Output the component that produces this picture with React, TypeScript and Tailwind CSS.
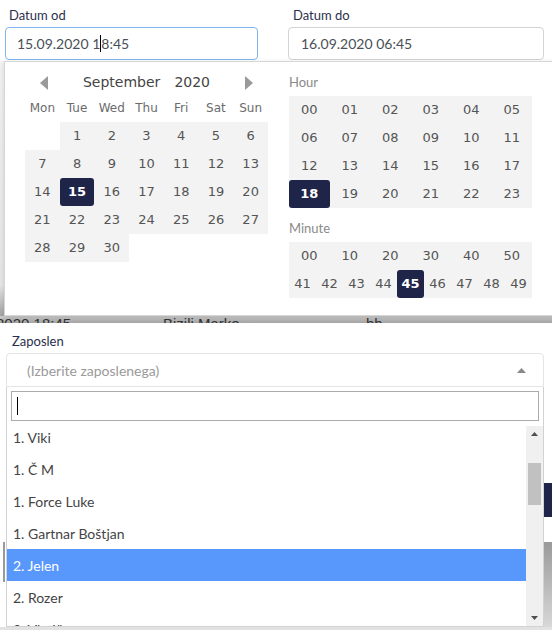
const weeks: (number | null)[][] = [
  [null, 1, 2, 3, 4, 5, 6],
  [7, 8, 9, 10, 11, 12, 13],
  [14, 15, 16, 17, 18, 19, 20],
  [21, 22, 23, 24, 25, 26, 27],
  [28, 29, 30, null, null, null, null],
];

const hours = Array.from({ length: 24 }, (_, i) => String(i).padStart(2, "0"));
const minutesTop = ["00", "10", "20", "30", "40", "50"];
const minutesFine = ["41", "42", "43", "44", "45", "46", "47", "48", "49"];

const employees = ["1. Viki", "1. Č M", "1. Force Luke", "1. Gartnar Boštjan", "2. Jelen", "2. Rozer", "3. Vlatič"];

function Arrow({ dir }: { dir: "left" | "right" }) {
  return (
    <svg width="8" height="14" viewBox="0 0 8 14">
      <polygon points={dir === "left" ? "8,0 0,7 8,14" : "0,0 8,7 0,14"} fill="#9a9a9a" />
    </svg>
  );
}

function Calendar() {
  return (
    <div className="w-[243px] shrink-0 font-['DejaVu_Sans',sans-serif]">
      <div className="h-[24px] flex items-center pt-[1px]">
        <div className="w-[38px] flex justify-center">
          <Arrow dir="left" />
        </div>
        <div className="flex-1 flex justify-center gap-[14px] text-[14px] text-[#444]">
          <span>September</span>
          <span>2020</span>
        </div>
        <div className="w-[38px] flex justify-center">
          <Arrow dir="right" />
        </div>
      </div>
      <div className="grid grid-cols-7 h-[28px] items-center text-center text-[12px] text-[#6b6b6b]">
        {["Mon", "Tue", "Wed", "Thu", "Fri", "Sat", "Sun"].map((d) => (
          <span key={d}>{d}</span>
        ))}
      </div>
      <div className="grid grid-cols-7">
        {weeks.flat().map((d, i) =>
          d === null ? (
            <div key={i} className="h-[28px]" />
          ) : d === 15 ? (
            <div key={i} className="h-[28px] flex items-center justify-center bg-[#f3f3f3]">
              <span className="w-full h-full flex items-center justify-center rounded-[3px] bg-[#1f2548] text-white font-bold text-[13px]">
                {d}
              </span>
            </div>
          ) : (
            <div key={i} className="h-[28px] flex items-center justify-center bg-[#f3f3f3] text-[13px] text-[#555]">
              {d}
            </div>
          )
        )}
      </div>
    </div>
  );
}

function TimePicker() {
  return (
    <div className="w-[243px] shrink-0">
      <div className="h-[24px] flex items-center pt-[1px] text-[13px] text-[#8a8a8a]">Hour</div>
      <div className="mt-[2px] grid grid-cols-6 bg-[#f3f3f3] font-['DejaVu_Sans',sans-serif] text-[13px] text-[#555]">
        {hours.map((h) => (
          <div
            key={h}
            className={
              h === "18"
                ? "h-[28px] flex items-center justify-center rounded-[3px] bg-[#1f2548] text-white font-bold"
                : "h-[28px] flex items-center justify-center"
            }
          >
            {h}
          </div>
        ))}
      </div>
      <div className="mt-[8px] h-[24px] flex items-center pt-[1px] text-[13px] text-[#8a8a8a]">Minute</div>
      <div className="mt-[2px] bg-[#f3f3f3] font-['DejaVu_Sans',sans-serif] text-[13px] text-[#555]">
        <div className="grid grid-cols-6">
          {minutesTop.map((m) => (
            <div key={m} className="h-[28px] flex items-center justify-center">
              {m}
            </div>
          ))}
        </div>
        <div className="grid grid-cols-9">
          {minutesFine.map((m) => (
            <div
              key={m}
              className={
                m === "45"
                  ? "h-[28px] flex items-center justify-center rounded-[3px] bg-[#1f2548] text-white font-bold"
                  : "h-[28px] flex items-center justify-center"
              }
            >
              {m}
            </div>
          ))}
        </div>
      </div>
    </div>
  );
}

export default function App() {
  return (
    <div className="w-[552px] h-[630px] overflow-hidden bg-white font-['Lato',sans-serif] text-[#495057]">
      {/* Date range */}
      <section className="relative h-[316px]">
        <div className="grid grid-cols-[253px_256px] gap-x-[30px] pl-[5px] pt-[6px]">
          <div>
            <label className="block pl-[4px] h-[21px] text-[13px] leading-[18px] text-[#2b2f4c]">Datum od</label>
            <div className="h-[33px] border border-[#7db6ee] rounded-[4px] pl-[11px] flex items-center text-[14px] text-[#495057]">
              15.09.2020 1<span className="inline-block w-px h-[17px] bg-black" />8:45
            </div>
          </div>
          <div>
            <label className="block pl-[5px] h-[21px] text-[13px] leading-[18px] text-[#2b2f4c]">Datum do</label>
            <div className="h-[33px] border border-[#d4d4d4] rounded-[4px] pl-[12px] flex items-center text-[14px] text-[#495057]">
              16.09.2020 06:45
            </div>
          </div>
        </div>

        <div className="absolute left-0 top-[61px] w-[5px] h-[255px] bg-gradient-to-b from-[#f4f4f4] via-[#e8e8e8] via-[88%] to-[#a4a4a4]" />

        {/* Date time popover */}
        <div className="absolute left-[4px] top-[61px] -right-[20px] h-[255px] bg-white border border-[#d6d6d6] shadow-[0_2px_6px_rgba(0,0,0,0.15)] flex gap-[21px] pl-[20px] pt-[8px]">
          <Calendar />
          <TimePicker />
        </div>
      </section>

      {/* Table row behind */}
      <div className="h-[7px] overflow-hidden bg-gradient-to-b from-[#d2d2d2] to-[#a6a6a6] flex text-[15px] leading-[15px] font-['Liberation_Sans',sans-serif] text-[#333]">
        <span className="-ml-[4px] w-[167px] shrink-0">2020 18:45</span>
        <span className="w-[203px] shrink-0">Bizili Marko</span>
        <span>bb</span>
      </div>

      {/* Employee select */}
      <section className="relative h-[307px]">
        <div className="absolute right-0 top-[160px] w-[8px] h-[34px] bg-[#1f2548]" />
        <div className="absolute right-0 top-[219px] w-[8px] h-[85px] bg-gradient-to-b from-[#9a9a9a] to-[#d8d8d8]" />
        <div className="absolute left-[3px] top-[219px] w-[2px] h-[40px] bg-[#9a9a9a]" />

        <label className="block pl-[12px] pt-[9px] text-[13px] leading-[18px] text-[#2b2f4c]">Zaposlen</label>
        <div className="relative ml-[6px] mt-[3px] w-[538px]">
          <div className="h-[34px] border border-[#e4e4e4] rounded-t-[4px] flex items-center justify-between pl-[20px] pr-[17px] text-[14px] text-[#9a9a9a]">
            <span>(Izberite zaposlenega)</span>
            <svg width="9" height="5" viewBox="0 0 9 5">
              <polygon points="0,5 4.5,0 9,5" fill="#888" />
            </svg>
          </div>
          <div className="h-[240px] bg-white border-x border-b border-[#d2d2d2] flex flex-col">
            <div className="px-[4px] pt-[4px]">
              <div className="h-[30px] border border-[#aaa] flex items-center pl-[5px]">
                <span className="w-px h-[18px] bg-black" />
              </div>
            </div>
            <div className="flex-1 flex overflow-hidden">
              <ul className="flex-1 overflow-hidden text-[14px] text-[#444]">
                {employees.map((e) => (
                  <li
                    key={e}
                    className={
                      e === "2. Jelen"
                        ? "h-[32px] shrink-0 flex items-center pl-[6px] bg-[#5897fb] text-white"
                        : "h-[32px] shrink-0 flex items-center pl-[6px]"
                    }
                  >
                    {e}
                  </li>
                ))}
              </ul>
              <div className="w-[17px] mt-[5px] bg-[#f0f0f0] flex flex-col items-center">
                <svg width="17" height="17" viewBox="0 0 17 17" className="shrink-0">
                  <polygon points="5,10 8.5,6 12,10" fill="#505050" />
                </svg>
                <div className="mt-[20px] w-[13px] h-[42px] bg-[#c1c1c1]" />
                <div className="flex-1" />
                <svg width="17" height="17" viewBox="0 0 17 17" className="shrink-0">
                  <polygon points="5,7 8.5,11 12,7" fill="#505050" />
                </svg>
              </div>
            </div>
          </div>
        </div>
        <div className="h-[3px] bg-[#e2e2e2]" />
      </section>
    </div>
  );
}
